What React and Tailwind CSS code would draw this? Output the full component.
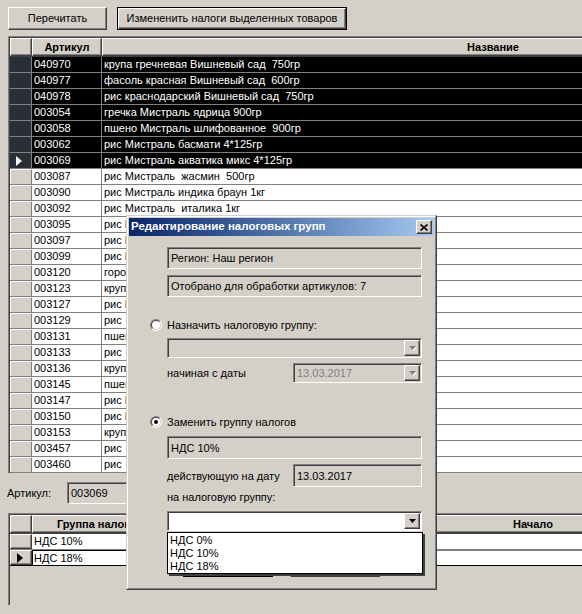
const raised =
  "border border-t-white border-l-white border-r-[#404040] border-b-[#404040] shadow-[inset_-1px_-1px_0_#808080] bg-[#d4d0c8]";
const sunken =
  "border border-t-[#808080] border-l-[#808080] border-r-white border-b-white shadow-[inset_1px_1px_0_#404040]";

const items = [
  ["040970", "крупа гречневая Вишневый сад  750гр", true],
  ["040977", "фасоль красная Вишневый сад  600гр", true],
  ["040978", "рис краснодарский Вишневый сад  750гр", true],
  ["003054", "гречка Мистраль ядрица 900гр", true],
  ["003058", "пшено Мистраль шлифованное  900гр", true],
  ["003062", "рис Мистраль басмати 4*125гр", true],
  ["003069", "рис Мистраль акватика микс 4*125гр", true, true],
  ["003087", "рис Мистраль  жасмин  500гр"],
  ["003090", "рис Мистраль индика браун 1кг"],
  ["003092", "рис Мистраль  италика 1кг"],
  ["003095", "рис Мистраль камолино 900гр"],
  ["003097", "рис Мистраль кубань 900гр"],
  ["003099", "рис Мистраль  жасмин 900гр"],
  ["003120", "горох Мистраль колотый 900гр"],
  ["003123", "крупа Мистраль кукурузная 900гр"],
  ["003127", "рис Мистраль  басмати 900гр"],
  ["003129", "рис  дикий Мистраль 500гр"],
  ["003131", "пшено Мистраль 900гр"],
  ["003133", "рис  Мистраль бурый 900гр"],
  ["003136", "крупа Мистраль перловая 900гр"],
  ["003145", "пшено Мистраль 4*125гр"],
  ["003147", "рис Мистраль  кубань 4*125гр"],
  ["003150", "рис Мистраль  жасмин 4*125гр"],
  ["003153", "крупа Мистраль гречневая 4*125гр"],
  ["003457", "рис  Мистраль шлифованный 1кг"],
  ["003460", "рис  Мистраль пропаренный 1кг"],
];

function Arrow({ color = "#000" }) {
  return (
    <svg width="7" height="4" viewBox="0 0 7 4">
      <polygon points="0,0 7,0 3.5,4" fill={color} />
    </svg>
  );
}

function ComboButton({ disabled }) {
  return (
    <div className={`${raised} w-[16px] h-full flex items-center justify-center`}>
      {disabled ? (
        <div className="relative">
          <div className="absolute left-[1px] top-[1px]">
            <Arrow color="#fff" />
          </div>
          <div className="relative">
            <Arrow color="#808080" />
          </div>
        </div>
      ) : (
        <Arrow />
      )}
    </div>
  );
}

function Radio({ checked }) {
  return (
    <div className="w-[12px] h-[12px] rounded-full border border-t-[#808080] border-l-[#808080] border-r-white border-b-white">
      <div className="w-full h-full rounded-full border border-t-[#404040] border-l-[#404040] border-r-[#d4d0c8] border-b-[#d4d0c8] bg-white flex items-center justify-center">
        {checked ? <div className="w-[4px] h-[4px] rounded-full bg-black" /> : null}
      </div>
    </div>
  );
}

function GridRow({ code, name, selected, current }) {
  return (
    <div className="flex h-[16px] border-b border-[#808080] leading-[15px]">
      <div
        className={`w-[22px] shrink-0 border-r border-[#808080] flex items-center pl-[6px] ${
          selected ? "bg-[#2b2e36]" : "bg-[#d4d0c8] border-t border-l border-t-white border-l-white"
        }`}
      >
        {current ? (
          <svg width="6" height="10" viewBox="0 0 6 10">
            <polygon points="0,0 6,5 0,10" fill="#fff" />
          </svg>
        ) : null}
      </div>
      <div
        className={`w-[70px] shrink-0 border-r border-[#808080] pl-[2px] ${
          selected ? "bg-black text-white" : "bg-white"
        }`}
      >
        {code}
      </div>
      <div className={`w-[782px] shrink-0 pl-[2px] whitespace-pre ${selected ? "bg-black text-white" : "bg-white"}`}>
        {name}
      </div>
    </div>
  );
}

function Dialog() {
  return (
    <div className="absolute left-[126px] top-[215px] w-[311px] h-[375px] bg-[#d4d0c8] border border-t-[#d4d0c8] border-l-[#d4d0c8] border-r-[#404040] border-b-[#404040]">
      <div className="relative h-full border border-t-white border-l-white border-r-[#808080] border-b-[#808080] p-[1px] flex flex-col">
        <div className="h-[18px] shrink-0 bg-linear-to-r from-[#0a246a] to-[#a6caf0] flex items-center justify-between pl-[2px] pr-[2px]">
          <span className="text-white font-bold text-[11.5px]">Редактирование налоговых групп</span>
          <div className={`${raised} w-[16px] h-[14px] flex items-center justify-center`}>
            <svg width="8" height="7" viewBox="0 0 8 7">
              <path d="M0.5 0.5 L7.5 6.5 M7.5 0.5 L0.5 6.5" stroke="#000" strokeWidth="1.6" />
            </svg>
          </div>
        </div>

        <div className="flex flex-col pl-[38px] leading-[14px]">
          <div className={`${sunken} mt-[11px] h-[22px] w-[255px] flex items-center pl-[3px]`}>Регион: Наш регион</div>
          <div className={`${sunken} mt-[6px] h-[22px] w-[255px] flex items-center pl-[3px]`}>
            Отобрано для обработки артикулов: 7
          </div>

          <div className="mt-[20px] h-[16px] -ml-[17px] flex items-center gap-[5px]">
            <Radio />
            <span>Назначить налоговую группу:</span>
          </div>
          <div className={`${sunken} mt-[5px] h-[20px] w-[255px] flex justify-end p-[1px]`}>
            <ComboButton disabled />
          </div>
          <div className="mt-[5px] h-[20px] flex items-center">
            <span className="w-[126px]">начиная с даты</span>
            <div className={`${sunken} h-full w-[129px] flex items-center justify-between pl-[3px] pr-[1px] py-[1px] text-[#808080]`}>
              <span>13.03.2017</span>
              <ComboButton disabled />
            </div>
          </div>

          <div className="mt-[31px] h-[16px] -ml-[17px] flex items-center gap-[5px]">
            <Radio checked />
            <span>Заменить группу налогов</span>
          </div>
          <div className={`${sunken} mt-[6px] h-[23px] w-[255px] flex items-center pl-[3px]`}>НДС 10%</div>
          <div className="mt-[5px] h-[23px] flex items-center">
            <span className="w-[126px]">действующую на дату</span>
            <div className={`${sunken} h-full w-[129px] flex items-center pl-[3px]`}>13.03.2017</div>
          </div>
          <div className="mt-[2px] h-[16px] flex items-center">на налоговую группу:</div>
          <div className={`${sunken} mt-[6px] h-[20px] w-[255px] flex justify-end p-[1px] bg-white`}>
            <ComboButton />
          </div>
          <div className="mt-[23px] h-[23px] flex pl-[16px] gap-[17px]">
            <div className="w-[90px] h-full border border-black">
              <div className={`${raised} h-full`} />
            </div>
            <div className={`${raised} w-[90px] h-full`} />
          </div>
        </div>

        <div className="absolute left-[39px] top-[315px] w-[256px] h-[42px] bg-white border border-black shadow-[2px_2px_0_#404040] pl-[2px] pt-[1px] leading-[13px]">
          <div>НДС 0%</div>
          <div>НДС 10%</div>
          <div>НДС 18%</div>
        </div>
      </div>
    </div>
  );
}

export default function App() {
  return (
    <div className="relative w-[582px] h-[614px] overflow-hidden bg-[#d4d0c8] text-black text-[11px] font-['Liberation_Sans',Arial,sans-serif]">
      <div className="flex gap-[10px] pt-[7px] pl-[8px]">
        <div className={`${raised} w-[99px] h-[23px] flex items-center justify-center`}>Перечитать</div>
        <div className="w-[230px] h-[23px] border border-black">
          <div className={`${raised} h-full flex items-center justify-center`}>Измененить налоги выделенных товаров</div>
        </div>
      </div>

      <div className="mt-[6px] ml-[8px] w-[574px] h-[437px] overflow-hidden border-t border-l border-[#808080]">
        <div className="h-full border-t border-l border-[#404040]">
          <div className="flex h-[19px] border-b border-[#404040] font-bold leading-[17px]">
            <div className={`${raised} w-[22px] shrink-0`} />
            <div className={`${raised} w-[70px] shrink-0 text-center`}>Артикул</div>
            <div className={`${raised} w-[782px] shrink-0 text-center`}>Название</div>
          </div>
          {items.map(([code, name, selected, current]) => (
            <GridRow key={code} code={code} name={name} selected={selected} current={current} />
          ))}
        </div>
      </div>

      <div className="mt-[9px] ml-[7px] flex items-center h-[22px]">
        <span className="w-[60px]">Артикул:</span>
        <div className={`${sunken} w-[100px] h-full flex items-center pl-[3px]`}>003069</div>
      </div>

      <div className="mt-[9px] ml-[8px] w-[574px] h-[92px] overflow-hidden border-t border-l border-[#808080]">
        <div className="h-full border-t border-l border-[#404040]">
          <div className="flex h-[19px] border-b border-[#404040] font-bold leading-[17px]">
            <div className={`${raised} w-[22px] shrink-0`} />
            <div className={`${raised} w-[135px] shrink-0 text-center`}>Группа налогов</div>
            <div className={`${raised} w-[732px] shrink-0 text-center`}>Начало</div>
          </div>
          <div className="flex h-[16px] border-b border-[#808080] leading-[15px]">
            <div className={`${raised} w-[22px] shrink-0`} />
            <div className="w-[135px] shrink-0 bg-white border-r border-[#808080] pl-[2px]">НДС 10%</div>
            <div className="w-[732px] shrink-0 bg-white" />
          </div>
          <div className="flex h-[16px] border-b border-black leading-[14px]">
            <div className={`${raised} w-[22px] shrink-0 flex items-center pl-[6px]`}>
              <svg width="6" height="10" viewBox="0 0 6 10">
                <polygon points="0,0 6,5 0,10" fill="#000" />
              </svg>
            </div>
            <div className="w-[135px] shrink-0 bg-white border-t border-l border-black pl-[1px]">НДС 18%</div>
            <div className="w-[732px] shrink-0 bg-white border-t border-[#808080]" />
          </div>
        </div>
      </div>

      <Dialog />
    </div>
  );
}
